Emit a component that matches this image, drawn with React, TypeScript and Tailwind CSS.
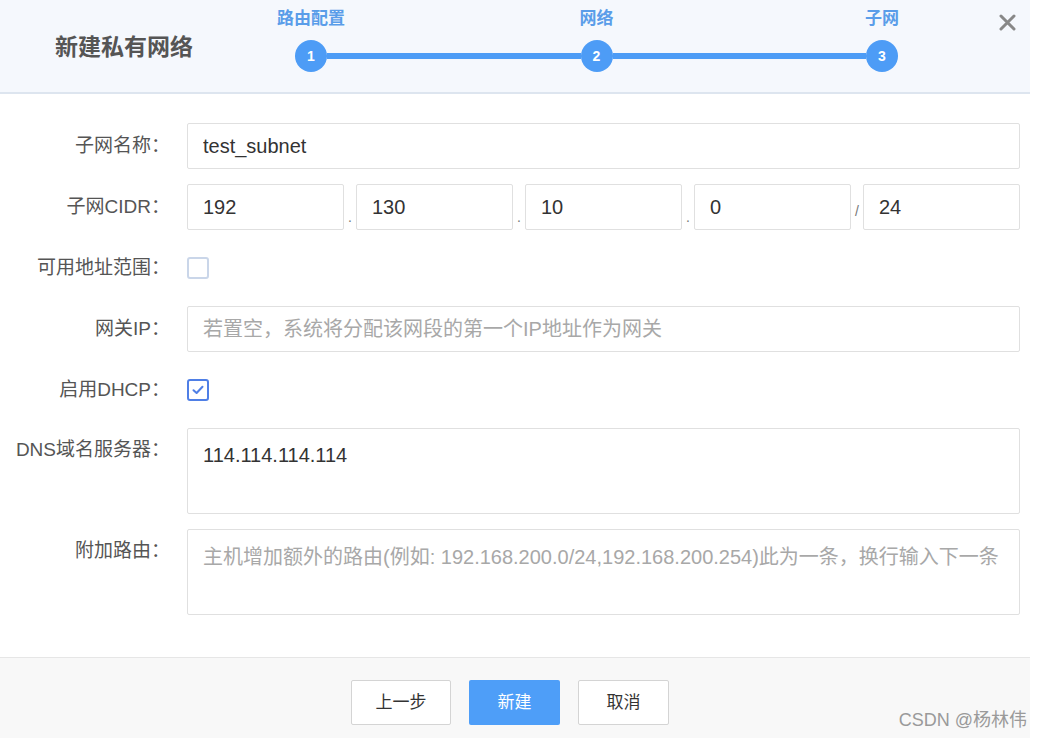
import React from "react"

const font = "font-['Liberation_Sans','Noto_Sans_CJK_SC',sans-serif]"

function Step({ label, n }: { label: string; n: number }) {
    return (
        <div className="flex w-8 flex-col items-center">
            <div className="whitespace-nowrap text-[17px] font-bold leading-[20px] text-[#5a9de9]">{label}</div>
            <div className="mt-[11px] flex h-8 w-8 items-center justify-center rounded-full bg-[#4d9cf6] text-[14px] font-bold leading-none text-white">
                {n}
            </div>
        </div>
    )
}

function Label({ children, top = false }: { children: React.ReactNode; top?: boolean }) {
    return (
        <div
            className={`w-[170px] shrink-0 whitespace-nowrap text-right text-[19px] leading-[24px] text-[#555] ${
                top ? "pt-[10px]" : "self-center"
            }`}
        >
            {children}
        </div>
    )
}

const inputCls =
    "h-[46px] w-0 min-w-0 flex-1 rounded-[2px] border border-[#e0e0e0] bg-white px-[15px] text-[20px] text-[#333] outline-none placeholder:text-[#a8a8a8]"

function Checkbox({ checked }: { checked?: boolean }) {
    return (
        <div
            className={`flex h-[22px] w-[22px] items-center justify-center rounded-[3px] border-2 bg-white ${
                checked ? "border-[#4f7fe6]" : "border-[#cad6e9]"
            }`}
        >
            {checked && (
                <svg width="14" height="14" viewBox="0 0 14 14" fill="none">
                    <path d="M2.5 7.2 L5.6 10 L11.5 3.8" stroke="#4f7fe6" strokeWidth="2" strokeLinecap="round" strokeLinejoin="round" />
                </svg>
            )}
        </div>
    )
}

function Sep({ ch }: { ch: string }) {
    return (
        <div className={`flex w-3 shrink-0 items-end justify-center text-[14px] text-[#777] ${ch === "." ? "pb-[2px]" : "pb-[8px]"}`}>
            {ch}
        </div>
    )
}

export default function App() {
    return (
        <div className={`relative h-[738px] w-[1040px] overflow-hidden bg-white ${font}`}>
            <div className="flex h-full w-[1030px] flex-col">
                {/* header */}
                <div className="flex h-[94px] shrink-0 border-b-2 border-[#dde5ef] bg-[#f5f8fd]">
                    <div className="w-[295px] shrink-0 self-center pl-[55px] pt-[2px] text-[23px] font-bold leading-[30px] text-[#555]">
                        新建私有网络
                    </div>
                    <div className="mt-[9px] flex w-[603px] items-end self-start">
                        <Step label="路由配置" n={1} />
                        <div className="mb-[13px] h-[6px] flex-1 bg-[#4d9cf6]" />
                        <Step label="网络" n={2} />
                        <div className="mb-[13px] h-[6px] flex-1 bg-[#4d9cf6]" />
                        <Step label="子网" n={3} />
                    </div>
                    <div className="ml-auto mr-[14px] mt-[14px] self-start">
                        <svg width="17" height="17" viewBox="0 0 17 17">
                            <path d="M2 2 L15 15 M15 2 L2 15" stroke="#888" strokeWidth="3" strokeLinecap="round" />
                        </svg>
                    </div>
                </div>

                {/* form */}
                <div className="flex flex-col gap-[15px] pr-[10px] pt-[29px]">
                    <div className="flex gap-[17px]">
                        <Label>子网名称：</Label>
                        <input className={inputCls} defaultValue="test_subnet" readOnly />
                    </div>
                    <div className="flex gap-[17px]">
                        <Label>子网CIDR：</Label>
                        <div className="flex min-w-0 flex-1">
                            <input className={inputCls} defaultValue="192" readOnly />
                            <Sep ch="." />
                            <input className={inputCls} defaultValue="130" readOnly />
                            <Sep ch="." />
                            <input className={inputCls} defaultValue="10" readOnly />
                            <Sep ch="." />
                            <input className={inputCls} defaultValue="0" readOnly />
                            <Sep ch="/" />
                            <input className={inputCls} defaultValue="24" readOnly />
                        </div>
                    </div>
                    <div className="flex h-[46px] gap-[17px]">
                        <Label>可用地址范围：</Label>
                        <div className="flex items-center">
                            <Checkbox />
                        </div>
                    </div>
                    <div className="flex gap-[17px]">
                        <Label>网关IP：</Label>
                        <input className={inputCls} placeholder="若置空，系统将分配该网段的第一个IP地址作为网关" readOnly />
                    </div>
                    <div className="flex h-[46px] gap-[17px]">
                        <Label>启用DHCP：</Label>
                        <div className="flex items-center">
                            <Checkbox checked />
                        </div>
                    </div>
                    <div className="flex gap-[17px]">
                        <Label top>DNS域名服务器：</Label>
                        <textarea
                            className="h-[86px] flex-1 resize-none rounded-[2px] border border-[#e0e0e0] px-[15px] pt-[14px] text-[20px] leading-[24px] text-[#333] outline-none"
                            defaultValue="114.114.114.114"
                            readOnly
                        />
                    </div>
                    <div className="flex gap-[17px]">
                        <Label top>附加路由：</Label>
                        <textarea
                            className="h-[86px] flex-1 resize-none rounded-[2px] border border-[#e0e0e0] px-[15px] pt-[15px] text-[20px] leading-[24px] text-[#333] outline-none placeholder:text-[#a8a8a8]"
                            placeholder="主机增加额外的路由(例如: 192.168.200.0/24,192.168.200.254)此为一条，换行输入下一条"
                            readOnly
                        />
                    </div>
                </div>

                {/* footer */}
                <div className="mt-auto flex h-[81px] shrink-0 justify-center gap-[18px] border-t border-[#e6e6e6] bg-[#f8f8f8] pr-[10px] pt-[22px]">
                    <button className="h-[45px] w-[100px] rounded-[2px] border border-[#d4d4d4] bg-white text-[17px] text-[#333]">上一步</button>
                    <button className="h-[45px] w-[91px] rounded-[2px] bg-[#4e9ef8] text-[17px] text-white">新建</button>
                    <button className="h-[45px] w-[91px] rounded-[2px] border border-[#d4d4d4] bg-white text-[17px] text-[#333]">取消</button>
                </div>
            </div>
            <div className="absolute bottom-[6px] right-[13px] text-[18px] leading-[24px] text-[#9a9a9a]">CSDN @杨林伟</div>
        </div>
    )
}
